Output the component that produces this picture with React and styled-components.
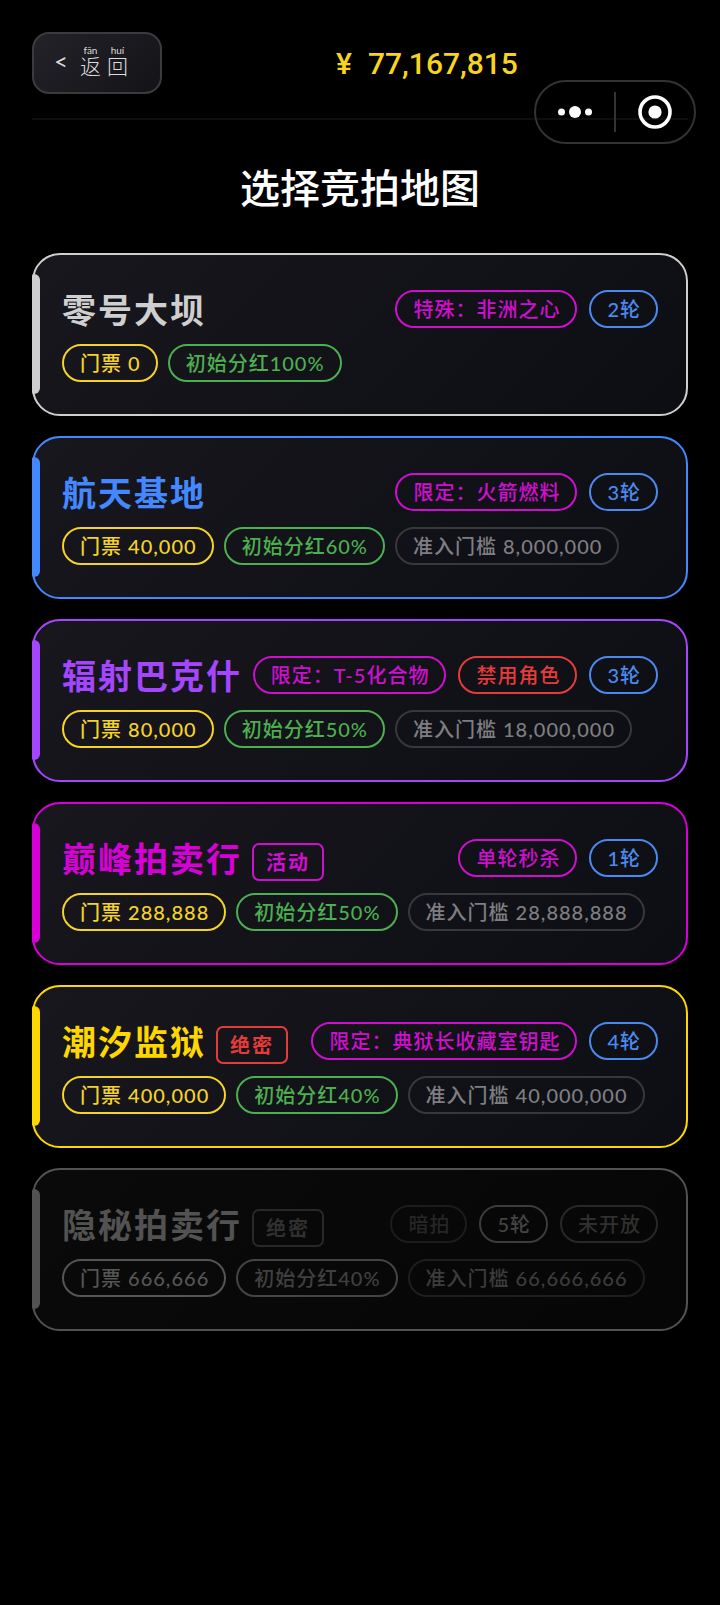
import React from "react";
import styled, { createGlobalStyle } from "styled-components";

const GlobalStyle = createGlobalStyle`
  * {
    box-sizing: border-box;
  }
  body {
    margin: 0;
    background: #000;
    color: #fff;
    font-family: Lato, "Noto Sans CJK SC", sans-serif;
  }
  button {
    font-family: inherit;
    cursor: pointer;
  }
`;

const Page = styled.div`
  position: relative;
  min-height: 100vh;
  padding: 32px;
`;

const Header = styled.header`
  display: flex;
  align-items: center;
  padding-bottom: 24px;
  border-bottom: 2px solid #0e0e0e;
`;

const BackButton = styled.button`
  display: flex;
  align-items: center;
  gap: 12px;
  height: 62px;
  padding: 0 32px 0 20px;
  border: 2px solid #3b3b3f;
  border-radius: 17px;
  background: linear-gradient(135deg, #222228, #131318);
  color: #dcdcdc;
`;

const BackArrow = styled.span`
  padding-bottom: 4px;
  font-size: 24px;
  line-height: 24px;
`;

const BackText = styled.span`
  display: flex;
  gap: 6px;
  padding-bottom: 4px;
  font-size: 21px;
  font-weight: 300;
`;

const Syllable = styled.ruby`
  display: flex;
  flex-direction: column-reverse;
  align-items: center;
  line-height: 22px;
`;

const Pinyin = styled.rt`
  display: block;
  font-size: 10px;
  line-height: 10px;
  font-weight: 400;
`;

const Balance = styled.div`
  display: flex;
  flex: 1;
  justify-content: center;
  gap: 16px;
  padding: 2px 0 0 4px;
  color: #f8d41c;
  font-family: Roboto, sans-serif;
  font-size: 30px;
  line-height: 40px;
  font-weight: 500;
`;

const Capsule = styled.div`
  position: absolute;
  top: 80px;
  right: 24px;
  display: flex;
  align-items: center;
  width: 162px;
  height: 64px;
  border: 2px solid #333;
  border-radius: 32px;
`;

const CapsuleButton = styled.button`
  display: flex;
  flex: 1;
  justify-content: center;
  padding: 0;
  border: 0;
  background: none;
`;

const CapsuleDivider = styled.div`
  width: 2px;
  height: 40px;
  background: #333;
`;

const Title = styled.h1`
  margin: 40px 0 37px;
  font-size: 40px;
  line-height: 56px;
  font-weight: 500;
  text-align: center;
`;

const MapList = styled.main`
  display: flex;
  flex-direction: column;
  gap: 20px;
`;

const MapCard = styled.button`
  position: relative;
  display: flex;
  flex-direction: column;
  gap: 9px;
  padding: 28px 28px 32px;
  border: 2px solid ${({ $color }) => $color};
  border-radius: 28px;
  background: linear-gradient(135deg, #17171d, #0d0e13);
  color: ${({ $color }) => $color};
  text-align: left;

  &::before {
    content: "";
    position: absolute;
    top: 19px;
    bottom: 20px;
    left: -2px;
    width: 8px;
    border-radius: 2px 6px 6px 2px;
    background: ${({ $color }) => $color};
  }

  &:disabled {
    background: linear-gradient(135deg, #0a0a0a, #060606);
    cursor: default;
  }
`;

const CardTop = styled.span`
  display: flex;
  align-items: center;
  justify-content: space-between;
  height: 52px;
`;

const NameGroup = styled.span`
  display: flex;
  align-items: center;
  gap: 10px;
`;

const MapName = styled.span`
  padding-top: 2px;
  font-size: 34px;
  line-height: 50px;
  font-weight: 700;
  letter-spacing: 2px;
  white-space: nowrap;
`;

const Tag = styled.span`
  margin-top: 8px;
  padding: 0 12px;
  border: 2px solid ${({ $line, $color }) => $line || $color};
  border-radius: 7px;
  color: ${({ $color }) => $color};
  font-size: 20px;
  line-height: 34px;
  font-weight: 700;
  letter-spacing: 2px;
  white-space: nowrap;
`;

const ChipRow = styled.span`
  display: flex;
  gap: ${({ $gap }) => $gap};
`;

const Chip = styled.span`
  padding: 0 15px 0 16px;
  border: 2px solid ${({ $line, $color }) => $line || $color};
  border-radius: 19px;
  color: ${({ $color }) => $color};
  font-size: 20px;
  line-height: 34px;
  font-weight: 500;
  letter-spacing: 1px;
  white-space: nowrap;
`;

const yellow = { color: "#f5d327" };
const green = { color: "#4caf50" };
const blue = { color: "#4a8af0" };
const magenta = { color: "#cf0fcf" };
const red = { color: "#e53c3a" };
const gray = { color: "#7e7e82", line: "#38383c" };

const maps = [
  {
    name: "零号大坝",
    color: "#cfcfcf",
    rules: [
      { text: "特殊：非洲之心", ...magenta },
      { text: "2轮", ...blue },
    ],
    costs: [
      { text: "门票 0", ...yellow },
      { text: "初始分红100%", ...green },
    ],
  },
  {
    name: "航天基地",
    color: "#4488ff",
    rules: [
      { text: "限定：火箭燃料", ...magenta },
      { text: "3轮", ...blue },
    ],
    costs: [
      { text: "门票 40,000", ...yellow },
      { text: "初始分红60%", ...green },
      { text: "准入门槛 8,000,000", ...gray },
    ],
  },
  {
    name: "辐射巴克什",
    color: "#a546ff",
    rules: [
      { text: "限定：T-5化合物", ...magenta },
      { text: "禁用角色", ...red },
      { text: "3轮", ...blue },
    ],
    costs: [
      { text: "门票 80,000", ...yellow },
      { text: "初始分红50%", ...green },
      { text: "准入门槛 18,000,000", ...gray },
    ],
  },
  {
    name: "巅峰拍卖行",
    color: "#d800d8",
    tag: { text: "活动", ...magenta },
    rules: [
      { text: "单轮秒杀", ...magenta },
      { text: "1轮", ...blue },
    ],
    costs: [
      { text: "门票 288,888", ...yellow },
      { text: "初始分红50%", ...green },
      { text: "准入门槛 28,888,888", ...gray },
    ],
  },
  {
    name: "潮汐监狱",
    color: "#ffd700",
    tag: { text: "绝密", ...red },
    rules: [
      { text: "限定：典狱长收藏室钥匙", ...magenta },
      { text: "4轮", ...blue },
    ],
    costs: [
      { text: "门票 400,000", ...yellow },
      { text: "初始分红40%", ...green },
      { text: "准入门槛 40,000,000", ...gray },
    ],
  },
  {
    name: "隐秘拍卖行",
    color: "#525252",
    closed: true,
    tag: { text: "绝密", color: "#303030", line: "#282828" },
    rules: [
      { text: "暗拍", color: "#262626", line: "#1c1c1c" },
      { text: "5轮", color: "#444444", line: "#3c3c3c" },
      { text: "未开放", color: "#303030", line: "#282828" },
    ],
    costs: [
      { text: "门票 666,666", color: "#555555" },
      { text: "初始分红40%", color: "#404040", line: "#444444" },
      { text: "准入门槛 66,666,666", color: "#3c3c3c", line: "#1e1e1e" },
    ],
  },
];

const Chips = ({ items, gap }) => (
  <ChipRow $gap={gap}>
    {items.map((item) => (
      <Chip key={item.text} $color={item.color} $line={item.line}>
        {item.text}
      </Chip>
    ))}
  </ChipRow>
);

const MapItem = ({ map }) => (
  <MapCard $color={map.color} disabled={map.closed}>
    <CardTop>
      <NameGroup>
        <MapName>{map.name}</MapName>
        {map.tag && (
          <Tag $color={map.tag.color} $line={map.tag.line}>
            {map.tag.text}
          </Tag>
        )}
      </NameGroup>
      <Chips items={map.rules} gap="12px" />
    </CardTop>
    <Chips items={map.costs} gap="10px" />
  </MapCard>
);

const App = () => {
  return (
    <Page lang="zh-CN">
      <GlobalStyle />
      <Header>
        <BackButton>
          <BackArrow>&lt;</BackArrow>
          <BackText>
            <Syllable>
              返<Pinyin>fān</Pinyin>
            </Syllable>
            <Syllable>
              回<Pinyin>huí</Pinyin>
            </Syllable>
          </BackText>
        </BackButton>
        <Balance>
          <span>¥</span>
          <span>77,167,815</span>
        </Balance>
      </Header>
      <Capsule>
        <CapsuleButton aria-label="更多">
          <svg width="36" height="36" viewBox="0 0 36 36" fill="#fff">
            <circle cx="4.5" cy="18" r="3.5" />
            <circle cx="18" cy="18" r="6" />
            <circle cx="31.5" cy="18" r="3.5" />
          </svg>
        </CapsuleButton>
        <CapsuleDivider />
        <CapsuleButton aria-label="关闭">
          <svg width="36" height="36" viewBox="0 0 36 36">
            <circle cx="18" cy="18" r="15" fill="none" stroke="#fff" strokeWidth="3.6" />
            <circle cx="18" cy="18" r="6.6" fill="#fff" />
          </svg>
        </CapsuleButton>
      </Capsule>
      <Title>选择竞拍地图</Title>
      <MapList>
        {maps.map((map) => (
          <MapItem key={map.name} map={map} />
        ))}
      </MapList>
    </Page>
  );
};

export default App;
